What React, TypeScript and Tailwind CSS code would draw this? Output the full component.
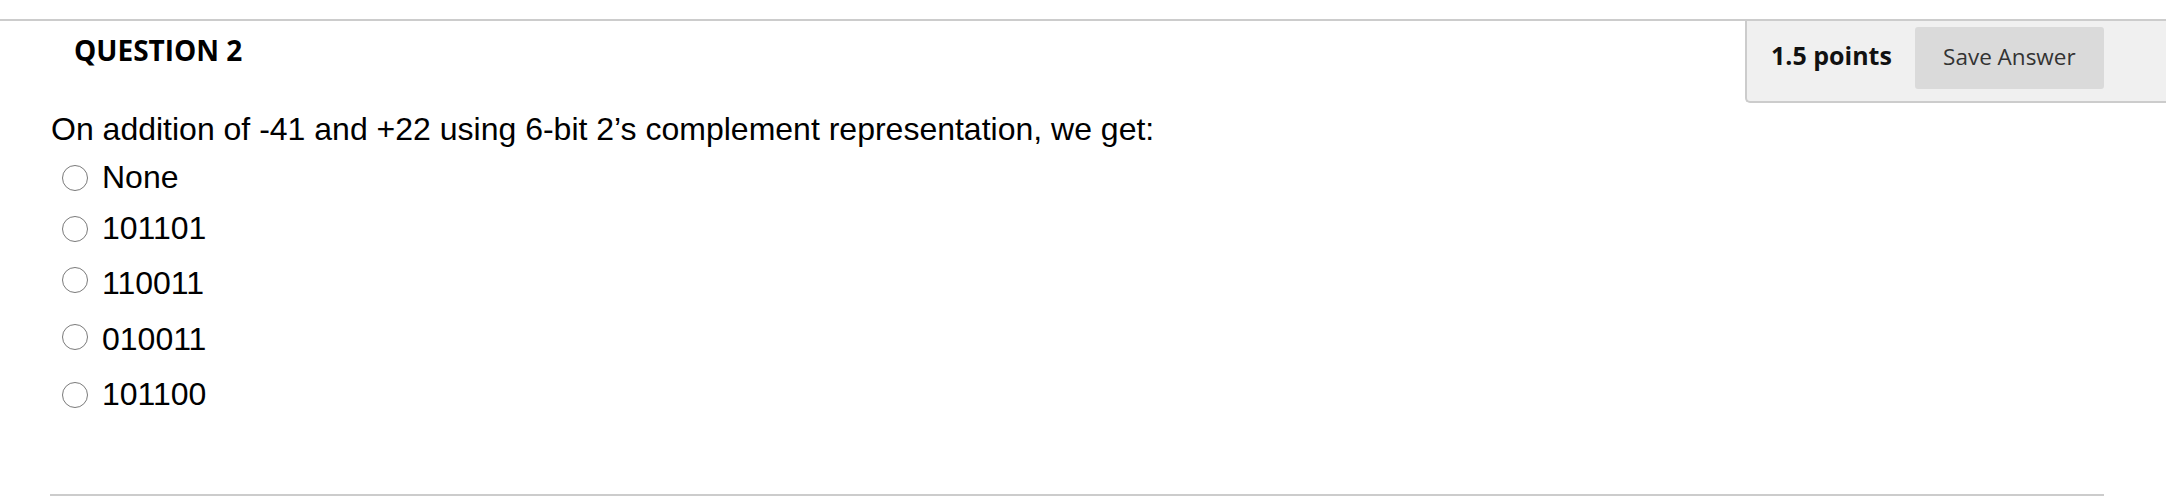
import React from "react";

const options = [
  { label: "None", row: "mt-[16px]", dot: "mt-[2px]" },
  { label: "101101", row: "mt-[19px]", dot: "mt-[2px]" },
  { label: "110011", row: "mt-[23px]", dot: "-mt-[6px]" },
  { label: "010011", row: "mt-[24px]", dot: "-mt-[5px]" },
  { label: "101100", row: "mt-[23px]", dot: "mt-[2px]" },
];

function App() {
  return (
    <div className="h-[500px] w-full bg-white flex flex-col pt-[19px]">
      <div className="border-t-2 border-[#cccccc] flex justify-between">
        <h2 className="pl-[74px] mt-[15px] text-[28px] leading-none font-bold text-black font-['Open_Sans',sans-serif]">
          QUESTION 2
        </h2>
        <div className="w-[421px] h-[82px] bg-[#f0f0f0] border-l-2 border-b-2 border-[#cccccc] rounded-bl-[5px] flex items-start pl-[24px] pt-[6px] gap-[23px] font-['Open_Sans',sans-serif]">
          <span className="text-[25px] font-bold text-[#111] leading-[56px]">
            1.5 points
          </span>
          <button className="w-[189px] h-[62px] pb-[3px] bg-[#dadada] rounded-[3px] text-[22.5px] text-[#333]">
            Save Answer
          </button>
        </div>
      </div>

      <div className="pl-[51px] font-['Liberation_Sans',Arial,sans-serif] text-black">
        <p className="mt-[10px] text-[32px] leading-none">
          On addition of -41 and +22 using 6-bit 2’s complement representation, we get:
        </p>
        {options.map((o) => (
          <label key={o.label} className={`flex items-center h-[32px] ${o.row}`}>
            <span
              className={`ml-[11px] w-[26px] h-[26px] rounded-full border-[1.5px] border-[#7a7a7a] bg-white ${o.dot}`}
            ></span>
            <span className="ml-[14px] text-[32px] leading-none">{o.label}</span>
          </label>
        ))}
      </div>

      <div className="mt-auto mb-[4px] ml-[50px] w-[2054px] h-[2px] bg-[#cccccc]"></div>
    </div>
  );
}

export default App;
